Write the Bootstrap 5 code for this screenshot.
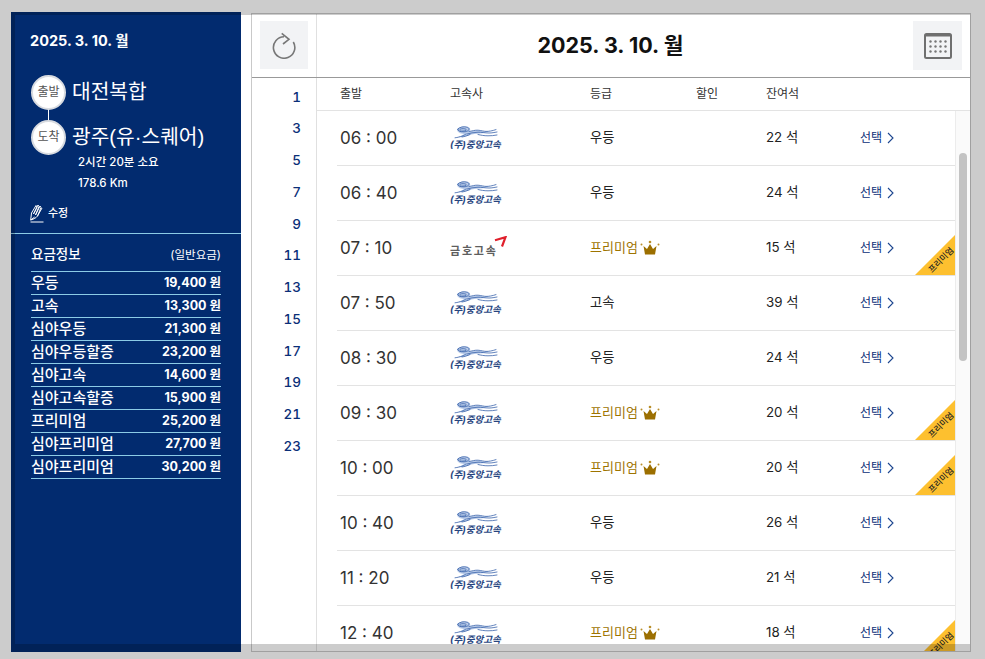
<!DOCTYPE html>
<html lang="ko">
<head>
<meta charset="utf-8">
<title>시간표</title>
<link href="https://cdn.jsdelivr.net/npm/bootstrap@5.3.0/dist/css/bootstrap.min.css" rel="stylesheet">
<style>
html,body{height:100%;overflow:hidden;background:#fff}
body{font-family:"Inter","Noto Sans CJK KR",sans-serif;color:#222;letter-spacing:0}
.stage{padding:12px 14px 7px 11px;height:659px}
.side{width:230px;height:640px;background:#022b6f;color:#fff;flex:none}
.side-top{height:222px;padding:20px 19px 0 19px;border-bottom:1px solid #8ccbe6}
.side-date{font-size:14.5px;font-weight:700;line-height:18px;margin-bottom:24px}
.stop{display:flex;align-items:center;height:36px;padding-left:1px}
.stop+.stop{margin-top:9px}
.dot{width:35px;height:35px;border-radius:50%;background:#fff;border:2px solid #d8dbe0;color:#555;font-size:12px;display:flex;align-items:center;justify-content:center;flex:none;position:relative}
.stop+.stop .dot::before{content:"";position:absolute;left:14.5px;top:-12px;width:1px;height:10px;background:#fff}
.stop-name{font-family:"Liberation Sans","Noto Sans CJK KR",sans-serif;font-size:20.3px;margin-left:6px;line-height:30px;white-space:nowrap}
.trip{font-size:11.5px;line-height:21px;padding-left:48px;margin-top:-3px;font-weight:500}
.edit{font-size:11px;line-height:16px;margin-top:9px;font-weight:500}
.fare{padding:9px 20px 0 20px}
.fare-head{display:flex;justify-content:space-between;align-items:flex-end;height:29px;padding-bottom:7px;border-bottom:1px solid #8ccbe6}
.fare-head b{font-weight:500;font-size:13.5px;line-height:20px}
.fare-head span{font-size:11.5px}
.fare-row{display:flex;justify-content:space-between;align-items:center;height:23px;border-bottom:1px solid #8ccbe6;font-size:15px;font-weight:500}
.fare-row b{font-size:12.5px;font-weight:700}
.panel{margin-left:10px;margin-top:1px;width:720px;height:639px;border:1px solid #c9c9c9;overflow:hidden;background:#fff}
.panel-top{height:64px;border-bottom:1px solid #999}
.tool-cell{width:65px;flex:none;border-right:1px solid #e0e0e0;padding:7px 0 0 8px}
.tool{width:48px;height:48px;background:#f2f3f5;border:0;padding:0;display:flex;align-items:center;justify-content:center}
.tool-lg{width:49px;height:49px}
.title{font-size:21.500px;font-weight:700;color:#111;line-height:63px;text-align:center;flex:1;padding-right:9px}
.cal-cell{padding:7px 8px 0 0;flex:none}
.hours{width:65px;flex:none;border-right:1px solid #e0e0e0;padding-top:3.500px}
.hours div{height:31.750px;line-height:31.750px;text-align:right;padding-right:15px;font-size:13.500px;color:#0b2f78;font-weight:500;font-variant-numeric:tabular-nums}
.head-row{display:grid;grid-template-columns:110px 140px 106px 70px 94px 1fr;padding-left:23px;height:33px;line-height:32px;font-size:12px;color:#333;border-bottom:1px solid #e3e3e3}
.body-wrap{height:541px;overflow:hidden}
.rows{flex:1;min-width:0}
.trow{display:grid;grid-template-columns:110px 140px 106px 70px 94px 1fr;height:55px;margin-left:20px;padding-left:3px;align-items:center;border-bottom:1px solid #e3e3e3;font-size:13.300px;position:relative}
.t-time{font-size:17px;color:#333;padding-top:1px}
.t-sel{color:#0b2f78;font-size:12px;display:flex;align-items:center;gap:5px}
.prem{color:#9e7400;display:flex;align-items:center;gap:2px;font-size:13px}
.ribbon{position:absolute;right:0;bottom:0;width:40px;height:40px}
.ribbon::before{content:"";position:absolute;inset:0;background:#fdc02f;clip-path:polygon(100% 0,100% 100%,0 100%)}
.ribbon span{position:absolute;left:7.500px;top:20px;width:36px;text-align:center;font-size:8.500px;line-height:10px;color:#222;font-weight:500;transform:rotate(-45deg);white-space:nowrap}
.sbar{width:15px;flex:none;background:#fafafa;border-left:1px solid #ececec;padding:42px 3px 0 3px}
.sthumb{height:208px;background:#c3c3c3;border-radius:4px}
.logo{display:block;width:54px;height:24px;position:relative}
.logo svg{display:block}
.logo-t{position:absolute;left:0;top:14px;font-size:9.500px;line-height:10px;font-weight:700;font-style:italic;color:#27457f;white-space:nowrap}
.kumho{position:relative;display:block;width:58px;height:24px}
.kumho span{position:absolute;left:0;top:8px;font-size:11px;font-weight:700;letter-spacing:1.800px;color:#5e5e5e;line-height:14px;white-space:nowrap}
.kumho svg{position:absolute;left:43px;top:0}
.frame{position:fixed;inset:0;border:15px solid rgba(0,0,0,.2);pointer-events:none}
</style>
</head>
<body>
<svg width="0" height="0" class="position-absolute">
<symbol id="tiger" viewBox="0 0 54 14">
<path fill="#b9cbe8" d="M7 3.500C8 .8 14-.4 18 1c3 1 2.500 3.500 1 4.500 3-.3 5-1.200 8-1l7 1 6-.8c-3 1.500-6 2.500-10 2.700-3 .2-8 .5-11 1.800-3 1.200-7 2-11 1.800 2-.8 5-1.800 6-3C10 7.800 7 6 7 3.500z"/>
<g fill="none" stroke="#3a63ab" stroke-width=".8" stroke-linecap="round">
<path d="M8 3c1.500-2 6-3 9.500-1.700 2.500 1 1.500 3.500-1 4.200-3 .8-7.500.3-8.500-1.500-.2-.4-.2-.7 0-1z"/>
<path d="M10 3.200c2-.8 4.500-.8 6 0M10 5c2 .3 4 .2 6-.5"/>
<path d="M19 5.500c3-.5 6-1.500 9-1.300 3 .2 6 1.200 8 1.200 3 .1 6-.5 10-1.800"/>
<path d="M17 8c3-.9 7-1.600 11-1.800 3-.1 7 .8 11 .8 3 0 5-.5 8-1M28 8.500c3 .7 6 1.300 10 1.300 3 0 6-.2 9-.8"/>
<path d="M16 8c-2 1.500-5 3-11 3.800M20 8.500c-3 1.300-5 2-8 2.500"/>
</g>
</symbol>
<symbol id="crown" viewBox="0 0 20 16">
<path fill="#9c6f00" d="M3.500 6l3.500 3L10 4l3 5 3.500-3-1.500 8.500H5z"/>
<circle cx="10" cy="2" r="1.300" fill="#b98e2a"/><circle cx="1.500" cy="4.500" r="1" fill="#b98e2a"/><circle cx="18.500" cy="4.500" r="1" fill="#b98e2a"/>
</symbol>
<symbol id="chev" viewBox="0 0 7 12"><path d="M1 1l5 5-5 5" fill="none" stroke="#1c468f" stroke-width="1.100"/></symbol>
</svg>

<div class="stage d-flex align-items-start">
  <aside class="side">
    <div class="side-top">
      <div class="side-date">2025. 3. 10. 월</div>
      <div class="stop"><span class="dot">출발</span><span class="stop-name">대전복합</span></div>
      <div class="stop"><span class="dot">도착</span><span class="stop-name">광주(유·스퀘어)</span></div>
      <div class="trip">2시간 20분 소요<br>178.6 Km</div>
      <div class="edit d-flex align-items-center gap-1">
        <svg width="14" height="20" viewBox="0 0 14 20" fill="none" stroke="#fff" stroke-width="1"><path d="M1.500 10L6 2.500 7 4 3.500 11M3.500 11L8 2l1 1.500L5.500 12M5.500 12L10 3l1 1.500L7.500 13M7.500 13L12 5M1.500 10L.7 17l4-3M7.500 13c-1.500 2-3.500 3-6.800 4M.5 19h13"/></svg>
        <span>수정</span>
      </div>
    </div>
    <div class="fare">
      <div class="fare-head"><b>요금정보</b><span>(일반요금)</span></div>
      <div class="fare-row"><span>우등</span><b>19,400 원</b></div>
      <div class="fare-row"><span>고속</span><b>13,300 원</b></div>
      <div class="fare-row"><span>심야우등</span><b>21,300 원</b></div>
      <div class="fare-row"><span>심야우등할증</span><b>23,200 원</b></div>
      <div class="fare-row"><span>심야고속</span><b>14,600 원</b></div>
      <div class="fare-row"><span>심야고속할증</span><b>15,900 원</b></div>
      <div class="fare-row"><span>프리미엄</span><b>25,200 원</b></div>
      <div class="fare-row"><span>심야프리미엄</span><b>27,700 원</b></div>
      <div class="fare-row"><span>심야프리미엄</span><b>30,200 원</b></div>
    </div>
  </aside>

  <main class="panel">
    <div class="panel-top d-flex">
      <div class="tool-cell"><button class="tool" aria-label="새로고침">
        <svg width="26" height="28" viewBox="0 0 26 28" fill="none" stroke="#777" stroke-width="1.600"><path d="M13 5.800A10.700 10.700 0 1 0 22.300 11"/><path d="M10.700 2.300L18 8.300 12 13"/></svg>
      </button></div>
      <div class="title">2025. 3. 10. 월</div>
      <div class="cal-cell"><button class="tool tool-lg" aria-label="달력">
        <svg width="28" height="26" viewBox="0 0 28 26"><rect x="1" y="1" width="26" height="24" rx="1.500" fill="none" stroke="#6f6f6f" stroke-width="2"/><rect x="1" y="1" width="26" height="2.500" fill="#6f6f6f"/><g fill="#777"><circle cx="6.500" cy="8.500" r="1.200"/><circle cx="11.500" cy="8.500" r="1.200"/><circle cx="16.500" cy="8.500" r="1.200"/><circle cx="21.500" cy="8.500" r="1.200"/><circle cx="6.500" cy="13.500" r="1.200"/><circle cx="11.500" cy="13.500" r="1.200"/><circle cx="16.500" cy="13.500" r="1.200"/><circle cx="21.500" cy="13.500" r="1.200"/><circle cx="6.500" cy="18.500" r="1.200"/><circle cx="11.500" cy="18.500" r="1.200"/><circle cx="16.500" cy="18.500" r="1.200"/><circle cx="21.500" cy="18.500" r="1.200"/></g></svg>
      </button></div>
    </div>
    <div class="d-flex">
      <nav class="hours"><div>1</div><div>3</div><div>5</div><div>7</div><div>9</div><div>11</div><div>13</div><div>15</div><div>17</div><div>19</div><div>21</div><div>23</div></nav>
      <div class="flex-grow-1" style="min-width:0">
        <div class="head-row"><span>출발</span><span>고속사</span><span>등급</span><span>할인</span><span>잔여석</span><span></span></div>
        <div class="body-wrap d-flex">
          <div class="rows">
            <div class="trow"><span class="t-time">06 : 00</span><span class="logo"><svg width="54" height="14"><use href="#tiger"/></svg><span class="logo-t">(주)중앙고속</span></span><span>우등</span><span></span><span>22 석</span><span class="t-sel">선택 <svg width="7" height="12"><use href="#chev"/></svg></span></div>
            <div class="trow"><span class="t-time">06 : 40</span><span class="logo"><svg width="54" height="14"><use href="#tiger"/></svg><span class="logo-t">(주)중앙고속</span></span><span>우등</span><span></span><span>24 석</span><span class="t-sel">선택 <svg width="7" height="12"><use href="#chev"/></svg></span></div>
            <div class="trow"><span class="t-time">07 : 10</span><span class="kumho"><span>금호고속</span><svg width="14" height="12" viewBox="0 0 14 12"><path d="M2 4.200L12.500 1.200 9 10.500" fill="none" stroke="#e0202c" stroke-width="2.200"/></svg></span><span class="prem">프리미엄<svg width="20" height="16"><use href="#crown"/></svg></span><span></span><span>15 석</span><span class="t-sel">선택 <svg width="7" height="12"><use href="#chev"/></svg></span><div class="ribbon"><span>프리미엄</span></div></div>
            <div class="trow"><span class="t-time">07 : 50</span><span class="logo"><svg width="54" height="14"><use href="#tiger"/></svg><span class="logo-t">(주)중앙고속</span></span><span>고속</span><span></span><span>39 석</span><span class="t-sel">선택 <svg width="7" height="12"><use href="#chev"/></svg></span></div>
            <div class="trow"><span class="t-time">08 : 30</span><span class="logo"><svg width="54" height="14"><use href="#tiger"/></svg><span class="logo-t">(주)중앙고속</span></span><span>우등</span><span></span><span>24 석</span><span class="t-sel">선택 <svg width="7" height="12"><use href="#chev"/></svg></span></div>
            <div class="trow"><span class="t-time">09 : 30</span><span class="logo"><svg width="54" height="14"><use href="#tiger"/></svg><span class="logo-t">(주)중앙고속</span></span><span class="prem">프리미엄<svg width="20" height="16"><use href="#crown"/></svg></span><span></span><span>20 석</span><span class="t-sel">선택 <svg width="7" height="12"><use href="#chev"/></svg></span><div class="ribbon"><span>프리미엄</span></div></div>
            <div class="trow"><span class="t-time">10 : 00</span><span class="logo"><svg width="54" height="14"><use href="#tiger"/></svg><span class="logo-t">(주)중앙고속</span></span><span class="prem">프리미엄<svg width="20" height="16"><use href="#crown"/></svg></span><span></span><span>20 석</span><span class="t-sel">선택 <svg width="7" height="12"><use href="#chev"/></svg></span><div class="ribbon"><span>프리미엄</span></div></div>
            <div class="trow"><span class="t-time">10 : 40</span><span class="logo"><svg width="54" height="14"><use href="#tiger"/></svg><span class="logo-t">(주)중앙고속</span></span><span>우등</span><span></span><span>26 석</span><span class="t-sel">선택 <svg width="7" height="12"><use href="#chev"/></svg></span></div>
            <div class="trow"><span class="t-time">11 : 20</span><span class="logo"><svg width="54" height="14"><use href="#tiger"/></svg><span class="logo-t">(주)중앙고속</span></span><span>우등</span><span></span><span>21 석</span><span class="t-sel">선택 <svg width="7" height="12"><use href="#chev"/></svg></span></div>
            <div class="trow"><span class="t-time">12 : 40</span><span class="logo"><svg width="54" height="14"><use href="#tiger"/></svg><span class="logo-t">(주)중앙고속</span></span><span class="prem">프리미엄<svg width="20" height="16"><use href="#crown"/></svg></span><span></span><span>18 석</span><span class="t-sel">선택 <svg width="7" height="12"><use href="#chev"/></svg></span><div class="ribbon"><span>프리미엄</span></div></div>
          </div>
          <div class="sbar"><div class="sthumb"></div></div>
        </div>
      </div>
    </div>
  </main>
</div>
<div class="frame"></div>
<script src="https://cdn.jsdelivr.net/npm/bootstrap@5.3.0/dist/js/bootstrap.bundle.min.js"></script>
</body>
</html>
